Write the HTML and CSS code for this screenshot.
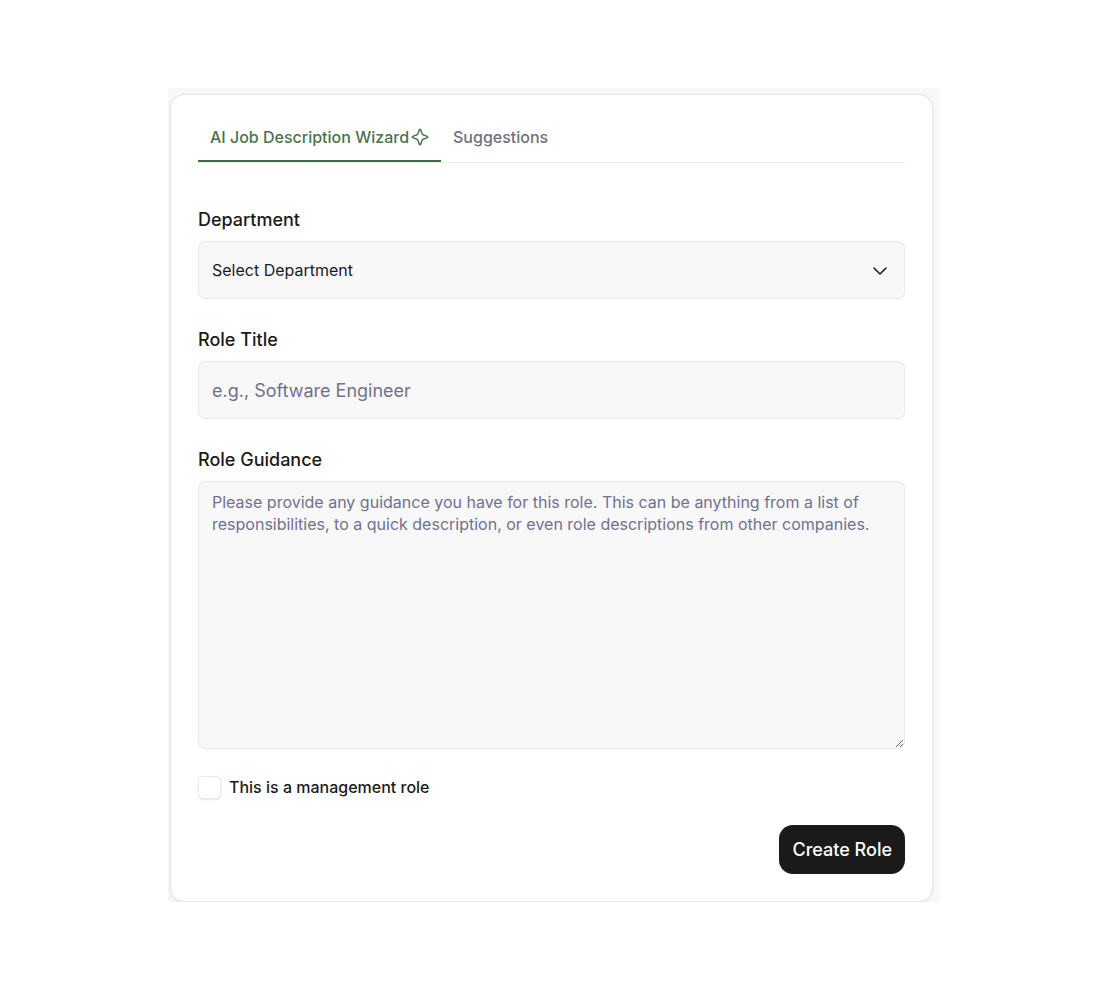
FILE: index.html
```html
<!DOCTYPE html>
<html lang="en">
<head>
<meta charset="utf-8">
<meta name="viewport" content="width=device-width, initial-scale=1">
<title>AI Job Description Wizard</title>
<link rel="stylesheet" href="styles.css">
</head>
<body>
<main class="backdrop">
  <section class="card">
    <div class="tabs" role="tablist">
      <button class="tab tab-active" type="button" role="tab" aria-selected="true">
        AI Job Description Wizard
        <svg class="sparkle" viewBox="0 0 18 18" aria-hidden="true"><path d="M9 1.2C9.5 1.2 9.7 1.7 9.9 2.3L11 5.6Q11.4 6.7 12.5 7L15.7 8.1C16.3 8.3 16.8 8.5 16.8 9S16.3 9.7 15.7 9.9L12.5 11Q11.4 11.3 11 12.4L9.9 15.7C9.7 16.3 9.5 16.8 9 16.8S8.3 16.3 8.1 15.7L7 12.4Q6.6 11.3 5.5 11L2.3 9.9C1.7 9.7 1.2 9.5 1.2 9S1.7 8.3 2.3 8.1L5.5 7Q6.6 6.7 7 5.6L8.1 2.3C8.3 1.7 8.5 1.2 9 1.2Z"/></svg>
      </button>
      <button class="tab" type="button" role="tab" aria-selected="false">Suggestions</button>
    </div>
    <form class="form">
      <div class="field">
        <label class="label" for="department">Department</label>
        <div class="select-wrap">
          <select class="control select" id="department"><option>Select Department</option></select>
          <svg class="chevron" viewBox="0 0 16 16" aria-hidden="true"><path d="M2 5l6 6 6-6"/></svg>
        </div>
      </div>
      <div class="field">
        <label class="label" for="title">Role Title</label>
        <input class="control input" id="title" type="text" placeholder="e.g., Software Engineer">
      </div>
      <div class="field">
        <label class="label" for="guidance">Role Guidance</label>
        <textarea class="control textarea" id="guidance" placeholder="Please provide any guidance you have for this role. This can be anything from a list of responsibilities, to a quick description, or even role descriptions from other companies."></textarea>
      </div>
      <div class="check-row">
        <input class="checkbox" id="management" type="checkbox">
        <label class="check-label" for="management">This is a management role</label>
      </div>
      <button class="submit" type="submit">Create Role</button>
    </form>
  </section>
</main>
</body>
</html>
```
FILE: styles.css
```css
* { box-sizing: border-box; }

body {
  margin: 0;
  padding: 88px 166px 88px 168px;
  background: #fff;
  color: #1b1b1b;
  font-family: Inter, "Liberation Sans", sans-serif;
}

button, input, select, textarea { font-family: inherit; }

.backdrop {
  padding: 6px 7px 0 2px;
  background: #f8f8f8;
  overflow: hidden;
}

.card {
  padding: 16px 27px 27px;
  border: 1px solid #e6e6e8;
  border-radius: 14px;
  background: #fff;
  box-shadow: 0 1px 3px rgba(0, 0, 0, 0.08);
}

.tabs {
  display: flex;
  border-bottom: 1px solid #ebebee;
}

.tab {
  display: flex;
  align-items: center;
  gap: 2px;
  height: 51px;
  padding: 2px 12px 0;
  border: 0;
  border-bottom: 2px solid transparent;
  background: none;
  color: #71717a;
  font-size: 16px;
  font-weight: 500;
  line-height: 24px;
  white-space: nowrap;
}

.tab-active {
  border-bottom-color: #436b47;
  color: #4a734e;
}

.sparkle {
  width: 18px;
  height: 18px;
  fill: none;
  stroke: currentColor;
  stroke-width: 1.5;
}

.form {
  display: flex;
  flex-direction: column;
  padding-top: 43px;
}

.field {
  display: flex;
  flex-direction: column;
  gap: 8px;
  margin-bottom: 27px;
}

.label {
  font-size: 18px;
  font-weight: 500;
  line-height: 27px;
}

.control {
  display: block;
  width: 100%;
  padding: 0 13px;
  border: 1px solid #e9e9eb;
  border-radius: 7px;
  background: #f8f8f8;
  color: #1b1b1b;
}

.control::placeholder {
  color: #71718c;
  opacity: 1;
}

.select-wrap { position: relative; }

.select {
  height: 58px;
  appearance: none;
  font-size: 16px;
}

.chevron {
  position: absolute;
  top: 22px;
  right: 17px;
  width: 16px;
  height: 16px;
  fill: none;
  stroke: #1b1b1b;
  stroke-width: 1.6;
  stroke-linecap: round;
  stroke-linejoin: round;
  pointer-events: none;
}

.input {
  height: 58px;
  font-size: 18px;
}

.textarea {
  height: 268px;
  padding-top: 9px;
  font-size: 16px;
  line-height: 22px;
  resize: vertical;
}

.check-row {
  display: flex;
  align-items: center;
  gap: 8px;
}

.checkbox {
  width: 23px;
  height: 23px;
  margin: 0;
  appearance: none;
  border: 1px solid #e9e9eb;
  border-radius: 5px;
  background: #fff;
  box-shadow: 0 1px 2px rgba(0, 0, 0, 0.1);
}

.checkbox:checked { background: #436b47; }

.check-label {
  font-size: 16px;
  font-weight: 500;
  line-height: 23px;
}

.submit {
  align-self: flex-end;
  height: 49px;
  margin-top: 26px;
  padding: 0 13px;
  border: 0;
  border-radius: 14px;
  background: #1a1a1a;
  color: #fff;
  font-size: 18px;
  font-weight: 500;
}
```
